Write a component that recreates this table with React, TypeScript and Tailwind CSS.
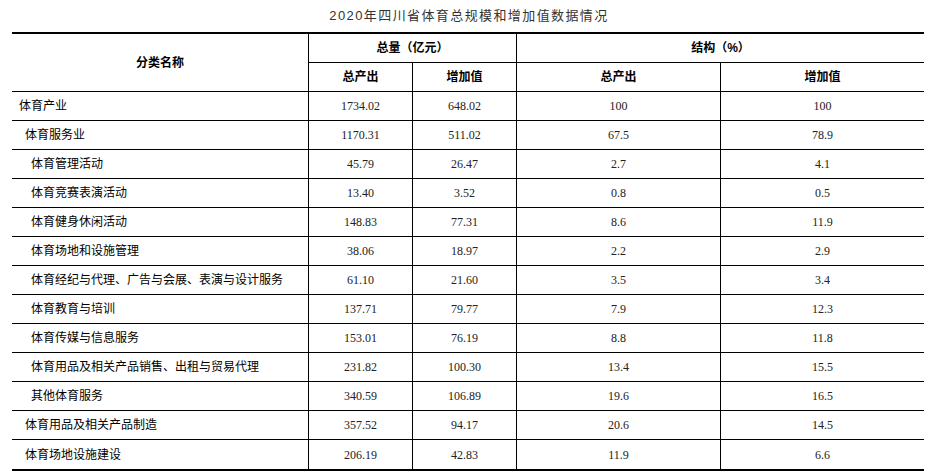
import React from "react";

type Row = { name: string; level: 0 | 1 | 2; output: string; added: string; outShare: string; addShare: string };

const rows: Row[] = [
  { name: "体育产业", level: 0, output: "1734.02", added: "648.02", outShare: "100", addShare: "100" },
  { name: "体育服务业", level: 1, output: "1170.31", added: "511.02", outShare: "67.5", addShare: "78.9" },
  { name: "体育管理活动", level: 2, output: "45.79", added: "26.47", outShare: "2.7", addShare: "4.1" },
  { name: "体育竞赛表演活动", level: 2, output: "13.40", added: "3.52", outShare: "0.8", addShare: "0.5" },
  { name: "体育健身休闲活动", level: 2, output: "148.83", added: "77.31", outShare: "8.6", addShare: "11.9" },
  { name: "体育场地和设施管理", level: 2, output: "38.06", added: "18.97", outShare: "2.2", addShare: "2.9" },
  { name: "体育经纪与代理、广告与会展、表演与设计服务", level: 2, output: "61.10", added: "21.60", outShare: "3.5", addShare: "3.4" },
  { name: "体育教育与培训", level: 2, output: "137.71", added: "79.77", outShare: "7.9", addShare: "12.3" },
  { name: "体育传媒与信息服务", level: 2, output: "153.01", added: "76.19", outShare: "8.8", addShare: "11.8" },
  { name: "体育用品及相关产品销售、出租与贸易代理", level: 2, output: "231.82", added: "100.30", outShare: "13.4", addShare: "15.5" },
  { name: "其他体育服务", level: 2, output: "340.59", added: "106.89", outShare: "19.6", addShare: "16.5" },
  { name: "体育用品及相关产品制造", level: 1, output: "357.52", added: "94.17", outShare: "20.6", addShare: "14.5" },
  { name: "体育场地设施建设", level: 1, output: "206.19", added: "42.83", outShare: "11.9", addShare: "6.6" },
];

const indent = ["pl-[7px]", "pl-[13px]", "pl-[19px]"];

const sans = "font-['Liberation_Sans','Noto_Sans_CJK_SC',sans-serif]";
const serif = "font-['Liberation_Serif','Noto_Sans_CJK_SC',serif]";

export default function App() {
  return (
    <div className="min-h-[476px] w-[929px] bg-white text-black">
      <div className="ml-[12px] w-[912px]">
        <h1 className={`flex h-[32px] items-center justify-center pb-[1px] pl-[2px] text-[13px] font-normal tracking-[1.4px] text-[#333] ${sans}`}>
          2020年四川省体育总规模和增加值数据情况
        </h1>

        <div className="grid grid-cols-[296px_104px_104px_204px_204px] border-y-2 border-black text-[12px] leading-none">
          {/* header */}
          <div className={`row-span-2 flex h-[58px] items-center justify-center border-b border-black font-bold ${sans}`}>
            分类名称
          </div>
          <div className={`col-span-2 flex h-[29px] items-center justify-center border-b border-l border-black font-bold ${sans}`}>
            总量（亿元）
          </div>
          <div className={`col-span-2 flex h-[29px] items-center justify-center border-b border-l border-black font-bold ${sans}`}>
            结构（%）
          </div>
          {["总产出", "增加值", "总产出", "增加值"].map((label, i) => (
            <div key={i} className={`flex h-[29px] items-center justify-center border-b border-l border-black font-bold ${sans}`}>
              {label}
            </div>
          ))}

          {/* body */}
          {rows.map((row, i) => {
            const last = i === rows.length - 1;
            const line = last ? "" : "border-b";
            return (
              <React.Fragment key={row.name}>
                <div className={`flex h-[29px] items-center border-black ${line} ${indent[row.level]} ${sans}`}>{row.name}</div>
                {[row.output, row.added, row.outShare, row.addShare].map((v, j) => (
                  <div key={j} className={`flex h-[29px] items-center justify-center border-l border-black text-[#222] ${line} ${serif}`}>
                    {v}
                  </div>
                ))}
              </React.Fragment>
            );
          })}
        </div>
      </div>
    </div>
  );
}
